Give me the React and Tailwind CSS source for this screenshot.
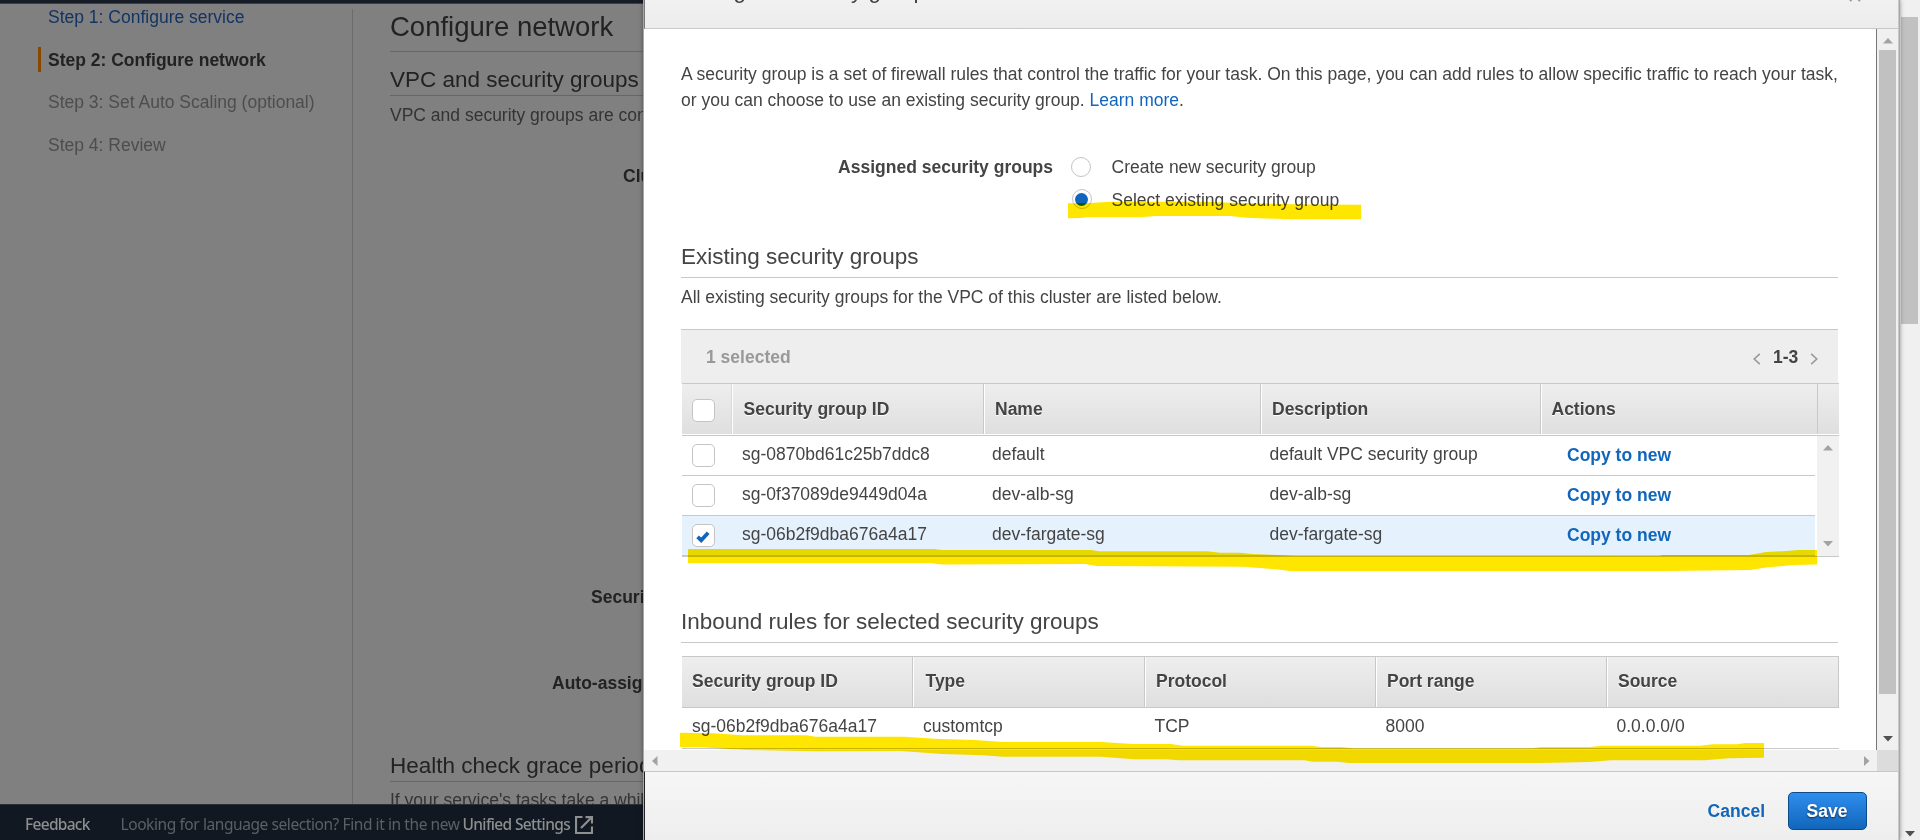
import React from "react";

const groups = [
  { id: "sg-0870bd61c25b7ddc8", name: "default", desc: "default VPC security group", checked: false },
  { id: "sg-0f37089de9449d04a", name: "dev-alb-sg", desc: "dev-alb-sg", checked: false },
  { id: "sg-06b2f9dba676a4a17", name: "dev-fargate-sg", desc: "dev-fargate-sg", checked: true },
];

const rowBase = "flex shrink-0 h-10 w-[1133px] border-b border-[#c8c8c8]";

function Arrow({ dir, className }) {
  const pts = {
    up: "5,0 10,5.5 0,5.5",
    down: "0,0 10,0 5,5.5",
    left: "5.5,0 5.5,10 0,5",
    right: "0,0 5.5,5 0,10",
  }[dir];
  const vertical = dir === "up" || dir === "down";
  return (
    <svg width={vertical ? 10 : 6} height={vertical ? 6 : 10} className={className} fill="currentColor">
      <polygon points={pts} />
    </svg>
  );
}

function Checkbox({ checked }) {
  return (
    <span className="flex h-[23px] w-[23px] items-center justify-center rounded-[5px] border border-[#c4c4c4] bg-white">
      {checked && (
        <svg width="14" height="12" viewBox="0 0 14 12" className="mr-px mt-[3px]" fill="none" stroke="#1166bb" strokeWidth="3.8">
          <path d="M1.6 5.8 L5.2 9.2 L12.2 1.8" />
        </svg>
      )}
    </span>
  );
}

function HeadCell({ className, children }) {
  return (
    <div
      className={
        "shrink-0 font-bold leading-[26px] [text-shadow:0_1px_0_#fff] bg-linear-to-b from-[#eeeeee] to-[#dfdfdf] " + className
      }
    >
      {children}
    </div>
  );
}

function Background() {
  return (
    <div className="flex h-[840px] w-[644px] flex-col overflow-hidden bg-[#808080]">
      <div className="h-1 shrink-0 border-b border-[#3b4045] bg-[#151c26]" />
      <div className="flex h-[800px] shrink-0 overflow-hidden">
        <nav className="flex w-[352px] shrink-0 flex-col gap-[16.6px] leading-[26px] text-[#4d4d4d]">
          <div className="pl-12 text-[#133463]">Step 1: Configure service</div>
          <div className="flex items-center font-bold text-[#222]">
            <span className="ml-[38px] mr-[7px] h-[25px] w-[3px] bg-[#884800]" />
            Step 2: Configure network
          </div>
          <div className="pl-12">Step 3: Set Auto Scaling (optional)</div>
          <div className="pl-12">Step 4: Review</div>
        </nav>
        <div className="mt-[5px] w-px shrink-0 bg-[#6c6c6c]" />
        <main className="ml-[37px] w-[900px] shrink-0 whitespace-nowrap text-[#333]">
          <h1 className="h-12 border-b border-[#666] pt-[5px] text-[27.5px] leading-9 text-[#222]">Configure network</h1>
          <h2 className="h-11 border-b border-[#666] pt-[14px] text-[22.5px] leading-7 text-[#222]">VPC and security groups</h2>
          <p className="mt-1.5 leading-[26px]">VPC and security groups are configurable</p>
          <div className="ml-[233px] mt-[35px] font-bold leading-[26px] text-[#222]">Cluster VPC</div>
          <div className="ml-[201px] mt-[395px] font-bold leading-[26px] text-[#222]">Security groups</div>
          <div className="ml-[162px] mt-[60px] font-bold leading-[26px] text-[#222]">Auto-assign</div>
          <h2 className="mt-[55px] h-[31px] border-b border-[#666] pt-px text-[22.5px] leading-7 text-[#222]">
            Health check grace period
          </h2>
          <p className="mt-[5px] leading-[26px]">If your service's tasks take a while to start</p>
        </main>
      </div>
      <footer className="flex h-9 shrink-0 items-center whitespace-nowrap border-t border-[#2a3038] bg-[#111821] pt-0.5 font-['Noto_Sans',sans-serif] text-[15.5px] text-[#5b6064]">
        <span className="ml-[25px] mt-0.5 w-[95.5px] font-medium tracking-[-0.7px] text-[#8d8f91]">Feedback</span>
        <span className="mt-0.5 w-[342px] tracking-[-0.42px]">Looking for language selection? Find it in the new</span>
        <span className="mt-0.5 w-[112.5px] font-medium tracking-[-0.65px] text-[#8d8f91]">Unified Settings</span>
        <svg width="18" height="18" viewBox="0 0 18 18" className="mt-0.5" fill="none" stroke="#8d8f91" strokeWidth="2.2">
          <path d="M7.5 1H1V17H17V10.5" />
          <path d="M10.5 1.1H17V7.5M17 1L6 12" />
        </svg>
      </footer>
    </div>
  );
}

function SecurityGroupTable() {
  return (
    <div className="mt-[19px]">
      <div className="flex h-[54px] items-start border-t border-[#c8c8c8] bg-[#eee] pt-[14px] font-bold leading-[26px]">
        <span className="ml-[25px] text-[#999]">1 selected</span>
        <span className="ml-auto mr-5 flex items-start">
          <svg width="8" height="12" className="mt-[9px]" fill="none" stroke="#999" strokeWidth="1.6">
            <path d="M6.8 0.8L1.2 6L6.8 11.2" />
          </svg>
          <span className="ml-[12px] w-[37px] text-[#444]">1-3</span>
          <svg width="8" height="12" className="mt-[9px]" fill="none" stroke="#999" strokeWidth="1.6">
            <path d="M1.2 0.8L6.8 6L1.2 11.2" />
          </svg>
        </span>
      </div>
      <div className="ml-px flex h-[53px] w-[1157px] border-y border-[#c8c8c8] bg-white pb-px">
        <HeadCell className="w-[50px] border-r border-[#d8d8d8] pl-[10px] pt-[15px]">
          <Checkbox />
        </HeadCell>
        <HeadCell className="w-[252px] border-l border-r border-l-white border-r-[#c8c8c8] pl-[10.5px] pt-3">Security group ID</HeadCell>
        <HeadCell className="w-[277px] border-l border-r border-l-white border-r-[#c8c8c8] pl-[10px] pt-3">Name</HeadCell>
        <HeadCell className="w-[280px] border-l border-r border-l-white border-r-[#c8c8c8] pl-[10px] pt-3">Description</HeadCell>
        <HeadCell className="w-[277px] border-l border-r border-l-white border-r-[#c8c8c8] pl-[9.5px] pt-3">Actions</HeadCell>
        <HeadCell className="w-[21px]" />
      </div>
      <div className="ml-px flex h-[121px] w-[1157px] border-b border-[#c8c8c8]">
        <div className="flex w-[1135px] flex-col">
          {groups.map((g) => (
            <div key={g.id} className={g.checked ? rowBase + " bg-[#e5f1fd]" : rowBase}>
              <div className="w-[60px] pl-[10px] pt-2">
                <Checkbox checked={g.checked} />
              </div>
              <div className="w-[250px] pt-[5px] leading-[26px]">{g.id}</div>
              <div className="w-[277.5px] pt-[5px] leading-[26px]">{g.name}</div>
              <div className="w-[297.5px] pt-[5px] leading-[26px]">{g.desc}</div>
              <div className="pt-1.5 font-bold leading-[26px] text-[#1166bb]">Copy to new</div>
            </div>
          ))}
        </div>
        <div className="flex w-[22px] flex-col items-center justify-between bg-[#f1f1f1] py-[9px] text-[#a3a3a3]">
          <Arrow dir="up" />
          <Arrow dir="down" />
        </div>
      </div>
    </div>
  );
}

function InboundTable() {
  return (
    <div className="ml-px mt-[13px] w-[1157px]">
      <div className="flex h-[52px] border-y border-[#c8c8c8]">
        <HeadCell className="w-[231px] border-r border-[#c8c8c8] pl-[10px] pt-[11px]">Security group ID</HeadCell>
        <HeadCell className="w-[232px] border-l border-r border-l-white border-r-[#c8c8c8] pl-[11.5px] pt-[11px]">Type</HeadCell>
        <HeadCell className="w-[231px] border-l border-r border-l-white border-r-[#c8c8c8] pl-[10px] pt-[11px]">Protocol</HeadCell>
        <HeadCell className="w-[231px] border-l border-r border-l-white border-r-[#c8c8c8] pl-[10px] pt-[11px]">Port range</HeadCell>
        <HeadCell className="w-[232px] border-l border-r border-l-white border-r-[#c8c8c8] pl-[10px] pt-[11px]">Source</HeadCell>
      </div>
      <div className="flex h-[41px] border-b border-[#c8c8c8] pl-[10px] pt-[5px] leading-[26px]">
        <div className="w-[231px]">sg-06b2f9dba676a4a17</div>
        <div className="w-[231.5px]">customtcp</div>
        <div className="w-[231px]">TCP</div>
        <div className="w-[231px]">8000</div>
        <div>0.0.0.0/0</div>
      </div>
    </div>
  );
}

function Modal() {
  return (
    <div className="absolute left-[644px] top-0 flex h-[840px] w-[1255px] flex-col border-r border-[#c8c8c8] bg-white shadow-[0_0_0_1px_#a8a8a8,0_0_5px_rgba(0,0,0,0.6)]">
      <header className="flex h-[29px] shrink-0 items-start justify-between overflow-hidden border-b border-l border-b-[#c8c8c8] border-l-[#777] bg-linear-to-b from-[#f1f1f1] to-[#ececec]">
        <h3 className="-mt-6 ml-9 text-[22.5px] leading-[30px]">Configure security groups</h3>
        <svg width="12" height="12" viewBox="0 0 12 12" className="-mt-[10.5px] mr-[37px]" stroke="#999" strokeWidth="2">
          <path d="M1 1L11 11M11 1L1 11" />
        </svg>
      </header>
      <div className="flex h-[721px] shrink-0">
        <div className="h-full w-[1233px] overflow-hidden border-r border-[#777] pl-[37px] pt-8">
          <div className="w-[1157px]">
            <p className="whitespace-nowrap leading-[26px]">
              A security group is a set of firewall rules that control the traffic for your task. On this page, you can add rules to
              allow specific traffic to reach your task,
              <br />
              or you can choose to use an existing security group. <span className="text-[#1166bb]">Learn more</span>.
            </p>
            <div className="mt-[41px] flex">
              <div className="w-[372px] text-right font-bold leading-[26px]">Assigned security groups</div>
              <div className="ml-[18px] flex flex-col gap-[7px] leading-[26px]">
                <label className="flex">
                  <span className="mr-[20.5px] mt-[3px] h-5 w-5 rounded-full border border-[#c4c4c4]" />
                  Create new security group
                </label>
                <label className="flex">
                  <span className="ml-px mr-[19.5px] mt-0.5 flex h-5 w-5 items-center justify-center rounded-full border border-[#c4c4c4]">
                    <span className="mr-px h-[13px] w-[13px] rounded-full bg-[#1166bb]" />
                  </span>
                  Select existing security group
                </label>
              </div>
            </div>
            <h2 className="mt-7 h-[37px] border-b border-[#c8c8c8] pt-px text-[22.5px] leading-[30px]">Existing security groups</h2>
            <p className="mt-1.5 leading-[26px]">All existing security groups for the VPC of this cluster are listed below.</p>
            <SecurityGroupTable />
            <h2 className="mt-[49px] h-[37px] border-b border-[#c8c8c8] pt-px text-[22.5px] leading-[30px]">
              Inbound rules for selected security groups
            </h2>
            <InboundTable />
          </div>
        </div>
        <div className="flex w-[21px] flex-col items-center bg-[#f0f0f0]">
          <Arrow dir="up" className="mt-[9px] text-[#a3a3a3]" />
          <div className="mt-1.5 h-[644px] w-[17px] bg-[#c1c1c1]" />
          <Arrow dir="down" className="mt-[42px] text-[#505050]" />
        </div>
      </div>
      <div className="flex h-[21px] shrink-0">
        <div className="flex w-[1233px] items-center justify-between bg-[#f1f1f1] pl-2 pr-[7px] text-[#a3a3a3]">
          <Arrow dir="left" />
          <Arrow dir="right" />
        </div>
        <div className="w-[21px] bg-[#dcdcdc]" />
      </div>
      <footer className="flex h-[69px] shrink-0 items-start justify-end border-l border-t border-l-[#222] border-t-[#c8c8c8] bg-linear-to-b from-[#f6f6f6] to-[#eeeeee] pt-5 font-bold">
        <button className="mr-[23px] mt-[6px] leading-[26px] text-[#1166bb]">Cancel</button>
        <button className="mr-[31px] h-[38px] w-[79px] rounded-[5px] border border-[#0d4a8c] bg-linear-to-b from-[#2e8eee] to-[#1166bb] pr-px text-white [text-shadow:0_1px_2px_rgba(0,0,0,0.6)]">
          Save
        </button>
      </footer>
    </div>
  );
}

function Highlights() {
  return (
    <svg width="1920" height="840" className="pointer-events-none absolute left-0 top-0 mix-blend-multiply" fill="#ffe600">
      <polygon points="1068,203.3 1090,203 1110,201.7 1200,201.7 1233,202.7 1293,204.3 1361,204.7 1361,219.3 1290,219.3 1247,217.7 1230,216 1157,216 1143,217 1090,217 1080,218 1068,218.3" />
      <polygon points="688,549 934,549 942,550 1091,550 1099,551.3 1207,551.3 1220,552.7 1240,552.7 1252,554 1280,555 1296,556 1660,556 1662,555 1749,555 1766,552 1786,551 1798,550 1817,550 1817,564.5 1794,565 1766,567.5 1750,570 1667,571 1290,571 1278,569.5 1244,566.7 1097,566 1085,564 942,564.5 930,563 688,563" />
      <polygon points="680,732.7 713.5,733.3 742,735.3 807,735.3 815.5,736.7 905,736.7 934,738.7 975,740 1003,742 1101,742 1134,744 1171,744 1183,745.7 1311,745.7 1321,747 1341,747 1353.5,748.3 1533,748.3 1541,747 1590,747 1602,745.7 1700,745.7 1712.6,744.3 1737,744.3 1745,743 1764,743 1764,757.7 1729,758.3 1704.5,760.3 1610.6,760.3 1590,762 1541,763 1349,763 1337,761.7 1312.6,761.7 1304.5,760.3 1179,760.3 1166.5,759.3 1134,759.3 1101,756.7 1003,756.7 983,755.3 942,754 901,751 815.5,751.3 746,750 701,747.3 680,747" />
    </svg>
  );
}

export default function App() {
  return (
    <div className="relative isolate flex h-[840px] w-[1920px] justify-between overflow-hidden bg-white font-['Liberation_Sans',Arial,sans-serif] text-[17.5px] text-[#444]">
      <Background />
      <aside className="flex h-full w-[21px] flex-col items-center bg-[#f0f0f0] pt-[17px]">
        <div className="h-[307px] w-[17px] bg-[#c1c1c1]" />
        <Arrow dir="down" className="mb-[3px] mt-auto text-[#505050]" />
      </aside>
      <Modal />
      <Highlights />
    </div>
  );
}
